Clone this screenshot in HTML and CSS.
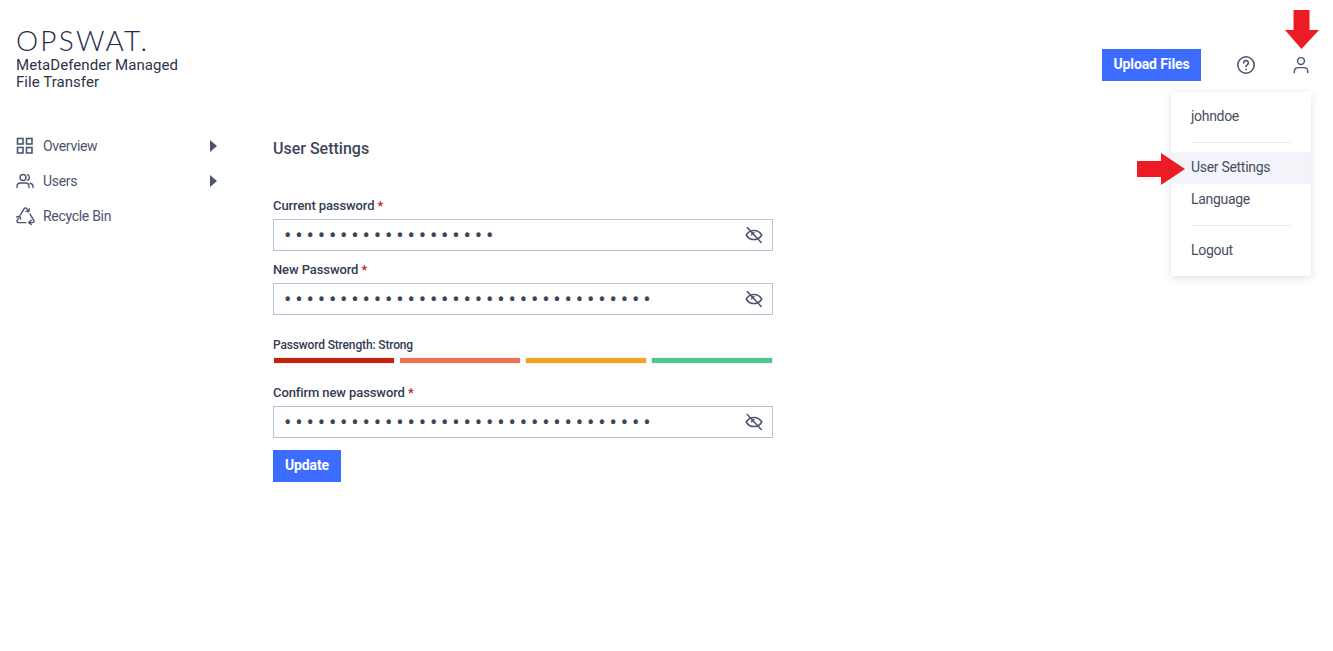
FILE: index.html
```html
<!DOCTYPE html>
<html lang="en">
<head>
    <meta charset="UTF-8">
    <title>User Settings</title>
    <link rel="stylesheet" href="styles.css">
</head>
<body>
    <header class="topbar">
        <div class="brand">
            <div class="logo">OPSWAT.</div>
            <div class="product">MetaDefender Managed<br>File Transfer</div>
        </div>
        <div class="top-actions">
            <button class="btn upload-btn">Upload Files</button>
            <svg class="top-icon help-icon" viewBox="0 0 20 20" fill="none" stroke="#4a5570" stroke-width="1.6" stroke-linecap="round">
                <circle cx="10" cy="10" r="8.2"/>
                <path d="M7.700 7.900a2.300 2.300 0 1 1 3.400 2c-.7.4-1.100.9-1.100 1.700"/>
                <path d="M10 14.300v.1"/>
            </svg>
            <svg class="top-icon user-icon" viewBox="0 0 20 20" fill="none" stroke="#4a5570" stroke-width="1.600" stroke-linecap="round">
                <circle cx="10" cy="5.600" r="3.800"/>
                <path d="M2.600 18.500v-1.600c0-2.300 1.800-4 4-4h6.800c2.200 0 4 1.700 4 4v1.600"/>
            </svg>
        </div>
    </header>

    <div class="content">
        <nav class="sidebar">
            <a class="nav-item">
                <svg class="nav-icon" viewBox="0 0 18 18" fill="none" stroke="#4a5570" stroke-width="1.600">
                    <rect x="1.500" y="1.500" width="5.500" height="5.500"/>
                    <rect x="10.500" y="1.500" width="5.500" height="5.500"/>
                    <rect x="1.500" y="10.500" width="5.500" height="5.500"/>
                    <rect x="10.500" y="10.500" width="5.500" height="5.500"/>
                </svg>
                <span class="nav-label">Overview</span>
                <span class="caret"></span>
            </a>
            <a class="nav-item">
                <svg class="nav-icon" viewBox="0 0 18 18" fill="none" stroke="#4a5570" stroke-width="1.400" stroke-linecap="round">
                    <circle cx="7" cy="5.500" r="3"/>
                    <path d="M1 15.500v-1c0-2 1.500-3.500 3.500-3.500h5c2 0 3.500 1.500 3.500 3.500v1"/>
                    <path d="M11.500 2.700a3 3 0 0 1 0 5.600"/>
                    <path d="M14.200 11.300c1.600.4 2.800 1.700 2.800 3.300v.9"/>
                </svg>
                <span class="nav-label">Users</span>
                <span class="caret"></span>
            </a>
            <a class="nav-item">
                <svg class="nav-icon recycle-icon" viewBox="0 0 20 20" fill="none" stroke="#4a5570" stroke-width="1.500" stroke-linecap="round" stroke-linejoin="round">
                    <path d="M4.500 9.500 8.600 2.700c.6-1 2.200-1 2.800 0l1.400 2.300"/>
                    <path d="M10.300 5.400l3 .6.800-3"/>
                    <path d="M14.800 8.500l4 6.800c.5 1-.2 2.200-1.300 2.200h-3"/>
                    <path d="M16 15l-2.500 2.500 2.500 2"/>
                    <path d="M10.500 17.500H2.500c-1.200 0-1.800-1.200-1.300-2.200l1.400-2.500"/>
                    <path d="M.8 11.600l3.200-.9.900 3"/>
                </svg>
                <span class="nav-label">Recycle Bin</span>
            </a>
        </nav>

        <main class="settings">
            <h1>User Settings</h1>
            <form class="settings-form">
                <label class="field-label">Current password <span class="req">*</span></label>
                <div class="pw-field">
                    <input type="password" value="johndoe123456789012">
                    <svg class="eye-icon" viewBox="0 0 18 18" fill="none" stroke="#4a5570" stroke-width="1.500" stroke-linecap="round">
                        <path d="M1.200 9C3 6 5.800 4.400 9 4.400S15 6 16.800 9c-1.800 3-4.600 4.600-7.800 4.600S3 12 1.200 9z"/>
                        <path d="M6.800 9a2.200 2.200 0 0 1 2.200-2.200"/>
                        <path d="M2.200 1.500l14 15"/>
                    </svg>
                </div>
                <label class="field-label">New Password <span class="req">*</span></label>
                <div class="pw-field">
                    <input type="password" value="johndoe12345678901234567890123456">
                    <svg class="eye-icon" viewBox="0 0 18 18" fill="none" stroke="#4a5570" stroke-width="1.500" stroke-linecap="round">
                        <path d="M1.200 9C3 6 5.800 4.400 9 4.400S15 6 16.800 9c-1.800 3-4.600 4.600-7.800 4.600S3 12 1.200 9z"/>
                        <path d="M6.800 9a2.200 2.200 0 0 1 2.200-2.200"/>
                        <path d="M2.200 1.500l14 15"/>
                    </svg>
                </div>
                <div class="strength-label">Password Strength: Strong</div>
                <div class="strength-bars">
                    <span class="bar bar-red"></span>
                    <span class="bar bar-orange"></span>
                    <span class="bar bar-yellow"></span>
                    <span class="bar bar-green"></span>
                </div>
                <label class="field-label">Confirm new password <span class="req">*</span></label>
                <div class="pw-field">
                    <input type="password" value="johndoe12345678901234567890123456">
                    <svg class="eye-icon" viewBox="0 0 18 18" fill="none" stroke="#4a5570" stroke-width="1.500" stroke-linecap="round">
                        <path d="M1.200 9C3 6 5.800 4.400 9 4.400S15 6 16.800 9c-1.800 3-4.600 4.600-7.800 4.600S3 12 1.200 9z"/>
                        <path d="M6.800 9a2.200 2.200 0 0 1 2.200-2.200"/>
                        <path d="M2.200 1.500l14 15"/>
                    </svg>
                </div>
                <button type="button" class="btn update-btn">Update</button>
            </form>
        </main>
    </div>

    <!-- user menu, open -->
    <div class="user-menu">
        <div class="menu-item menu-name">johndoe</div>
        <div class="menu-sep"></div>
        <div class="menu-item active">User Settings</div>
        <div class="menu-item">Language</div>
        <div class="menu-sep"></div>
        <div class="menu-item">Logout</div>
    </div>

    <!-- red annotation arrows -->
    <svg class="arrow arrow-down" viewBox="0 0 34 39"><path d="M8.500 0h16v20H34L16.500 39 0 20h8.500z" fill="#ed1c24"/></svg>
    <svg class="arrow arrow-right" viewBox="0 0 48 32"><path d="M0 8h24V0l24 16-24 16v-8H0z" fill="#ed1c24"/></svg>
</body>
</html>
```

FILE: styles.css
```css
* {
    box-sizing: border-box;
}
body {
    margin: 0;
    font-family: 'Roboto', 'Liberation Sans', sans-serif;
    font-size: 14px;
    color: #3d4659;
    background-color: #fff;
}
.topbar {
    display: flex;
    justify-content: space-between;
    padding: 26px 23px 0 16px;
    height: 128px;
}
.logo {
    font-family: 'Lato', sans-serif;
    font-weight: 300;
    font-size: 28px;
    line-height: 28px;
    letter-spacing: 2.2px;
    margin-bottom: 3px;
    color: #1e2a45;
}
.product {
    font-size: 15px;
    line-height: 17px;
    letter-spacing: 0.05px;
    color: #2b3448;
}
.top-actions {
    display: flex;
    align-items: flex-start;
    padding-top: 23px;
}
.btn {
    background-color: #3d6dff;
    color: #fff;
    border: none;
    height: 32px;
    font-family: inherit;
    font-size: 14px;
    font-weight: 700;
    letter-spacing: -0.1px;
    padding: 0 0 2px;
}
.upload-btn {
    width: 99px;
    margin-right: 35px;
}
.top-icon {
    width: 18px;
    height: 20px;
    margin-top: 6px;
}
.help-icon {
    width: 20px;
    margin-right: 36px;
}
.content {
    display: flex;
}
.sidebar {
    width: 273px;
    padding: 0 16px;
    flex-shrink: 0;
}
.nav-item {
    display: flex;
    align-items: center;
    height: 35px;
    width: 201px;
    color: #4a5570;
    letter-spacing: -0.3px;
}
.nav-icon {
    width: 18px;
    height: 18px;
    margin-right: 9px;
}
.recycle-icon {
    width: 19px;
    height: 19px;
    margin-right: 8px;
}
.nav-label {
    flex: 1;
}
.caret {
    width: 0;
    height: 0;
    border-left: 7px solid #4a5570;
    border-top: 6px solid transparent;
    border-bottom: 6px solid transparent;
}
.settings {
    width: 500px;
}
.settings h1 {
    margin: 11px 0 0;
    font-size: 16px;
    line-height: 20px;
    font-weight: 500;
    color: #3d4659;
}
.settings-form {
    margin-top: 39px;
}
.field-label {
    display: block;
    font-size: 13px;
    font-weight: 500;
    line-height: 16px;
    margin-bottom: 5px;
    color: #333c52;
    letter-spacing: -0.1px;
}
.req {
    color: #c4210f;
}
.pw-field {
    position: relative;
    height: 32px;
    margin-bottom: 11px;
}
.pw-field input {
    width: 100%;
    height: 32px;
    border: 1px solid #b5c2da;
    padding: 0 40px 0 10px;
    font-family: 'Roboto', sans-serif;
    font-size: 22px;
    letter-spacing: 3.8px;
    color: #3d4659;
    outline: none;
}
.eye-icon {
    position: absolute;
    right: 10px;
    top: 7px;
    width: 18px;
    height: 18px;
}
.strength-label {
    font-size: 12px;
    font-weight: 500;
    line-height: 14px;
    letter-spacing: -0.15px;
    margin-top: 23px;
    color: #333c52;
}
.strength-bars {
    display: grid;
    grid-template-columns: repeat(4, 1fr);
    gap: 4px;
    margin: 5px 0 21px;
}
.bar {
    height: 7px;
    border: 1px solid #f1f1f1;
}
.bar-red { background-color: #c4210f; }
.bar-orange { background-color: #ed7051; }
.bar-yellow { background-color: #f0a41f; }
.bar-green { background-color: #4dc98b; }
.update-btn {
    width: 68px;
    margin-top: 1px;
}
.user-menu {
    position: absolute;
    left: 1171px;
    top: 92px;
    width: 140px;
    height: 184px;
    padding-top: 8px;
    background-color: #fff;
    box-shadow: 0 2px 8px rgba(40, 50, 90, 0.15);
}
.menu-item {
    height: 32px;
    line-height: 30px;
    padding-left: 20px;
    color: #474e5e;
    letter-spacing: -0.3px;
}
.menu-name {
    line-height: 32px;
}
.menu-item.active {
    background-color: #f3f4f9;
}
.menu-sep {
    height: 1px;
    margin: 9px 20px;
    background-color: #e8eaee;
}
.menu-name + .menu-sep {
    margin-top: 10px;
}
.arrow {
    position: absolute;
}
.arrow-down {
    left: 1285px;
    top: 10px;
    width: 34px;
    height: 39px;
}
.arrow-right {
    left: 1137px;
    top: 153px;
    width: 48px;
    height: 32px;
}
```
